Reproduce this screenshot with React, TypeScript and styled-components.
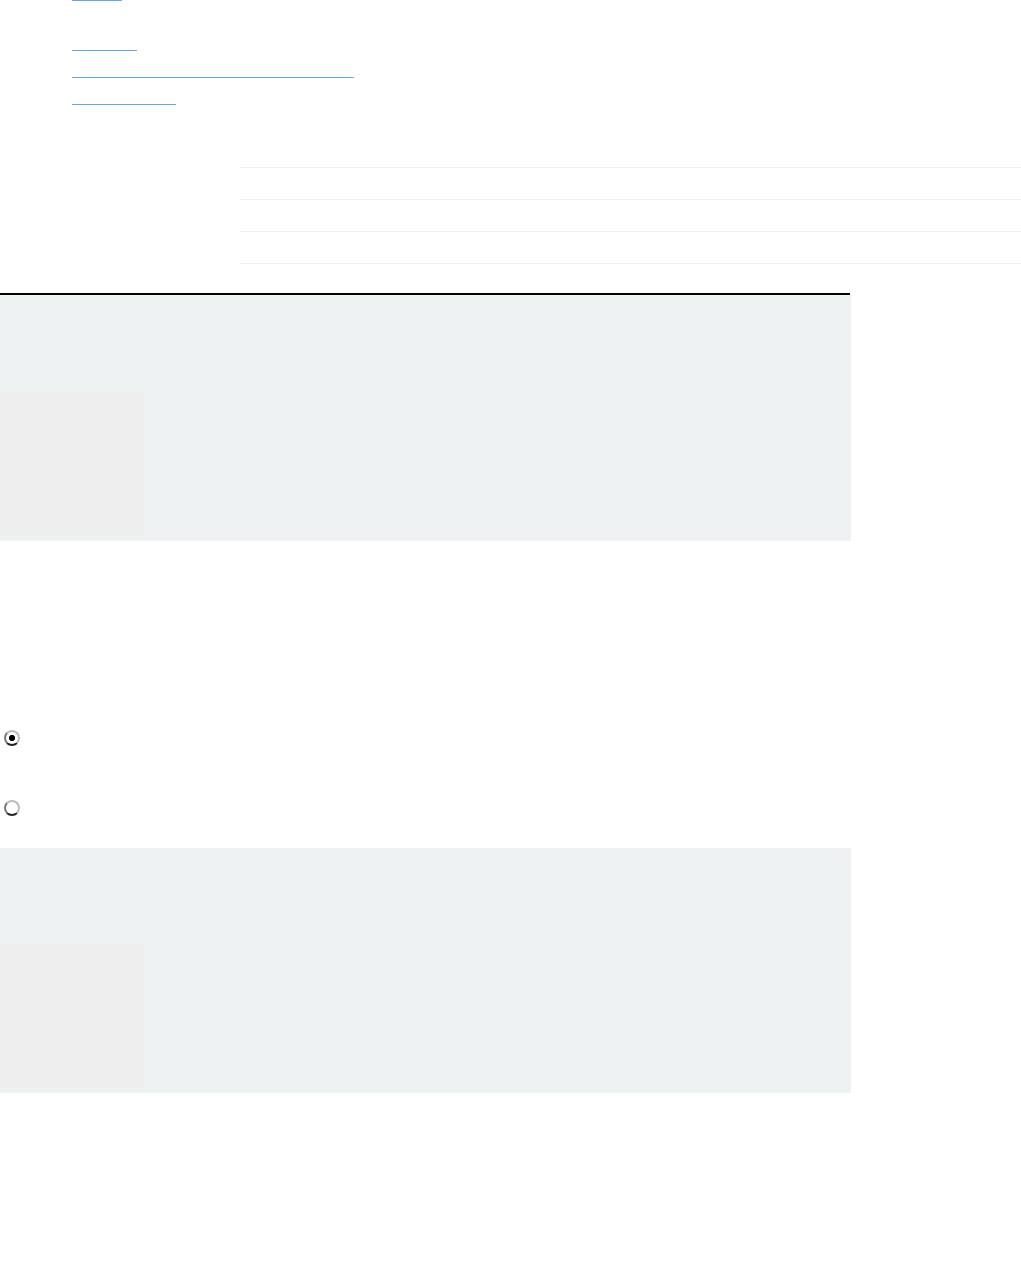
import React from "react";
import styled, { createGlobalStyle } from "styled-components";

const Global = createGlobalStyle`
  html, body { margin: 0; padding: 0; background: #ffffff; }
  body { font-family: "Liberation Sans", Arial, sans-serif; font-size: 14px; color: #333; }
`;

const Page = styled.div`
  display: flex;
  flex-direction: column;
  width: 1021px;
  min-height: 1275px;
`;

const NavList = styled.ul`
  list-style: none;
  margin: 0;
  padding: 0 0 0 72px;
  display: flex;
  flex-direction: column;
`;

const NavItem = styled.li<{ $top: number }>`
  margin-top: ${(p) => p.$top}px;
  height: 1px;
  display: flex;
`;

const NavLink = styled.a<{ $w: number }>`
  display: block;
  width: ${(p) => p.$w}px;
  height: 1px;
  background: #5ea9ef;
  color: transparent;
  font-size: 0;
  text-decoration: none;
`;

const Table = styled.div`
  margin: 62px 0 0 240px;
  display: flex;
  flex-direction: column;
  border-bottom: 1px solid #efefef;
`;

const Row = styled.div`
  height: 31px;
  border-top: 1px solid #efefef;
`;

const Panel = styled.section<{ $rule?: boolean; $top: number }>`
  margin-top: ${(p) => p.$top}px;
  width: 851px;
  display: flex;
  flex-direction: column;
  ${(p) =>
    p.$rule
      ? `&::before { content: ""; display: block; width: 850px; height: 2px; background: #000; }`
      : ""}
`;

const PanelBody = styled.div<{ $pad: number; $h: number }>`
  background: #eef2f3;
  height: ${(p) => p.$h}px;
  box-sizing: border-box;
  padding-top: ${(p) => p.$pad}px;
  display: flex;
`;

const Thumb = styled.div`
  width: 144px;
  height: 144px;
  background: #efeeee;
`;

const RadioGroup = styled.div`
  margin-top: 189px;
  display: flex;
  flex-direction: column;
  gap: 54px;
  padding-left: 4px;
`;

const Radio = styled.input`
  appearance: none;
  -webkit-appearance: none;
  margin: 0;
  width: 16px;
  height: 16px;
  border-radius: 50%;
  box-sizing: border-box;
  border: 2px solid #bdbdbd;
  border-left-color: #7a7a7a;
  border-bottom-color: #222;
  background: #fff;
  &:checked {
    background: radial-gradient(circle, #000 0 2.8px, #fff 3.3px);
  }
`;

export default function App() {
  const links = [
    { top: 0, w: 50 },
    { top: 49, w: 65 },
    { top: 26, w: 282 },
    { top: 26, w: 104 },
  ];
  return (
    <>
      <Global />
      <Page>
        <NavList>
          {links.map((l, i) => (
            <NavItem key={i} $top={l.top}>
              <NavLink href="#" $w={l.w} />
            </NavItem>
          ))}
        </NavList>
        <Table>
          <Row />
          <Row />
          <Row />
        </Table>
        <Panel $rule $top={29}>
          <PanelBody $pad={97} $h={246}>
            <Thumb />
          </PanelBody>
        </Panel>
        <RadioGroup>
          <Radio type="radio" name="opt" defaultChecked />
          <Radio type="radio" name="opt" />
        </RadioGroup>
        <Panel $top={32}>
          <PanelBody $pad={96} $h={245}>
            <Thumb />
          </PanelBody>
        </Panel>
      </Page>
    </>
  );
}
